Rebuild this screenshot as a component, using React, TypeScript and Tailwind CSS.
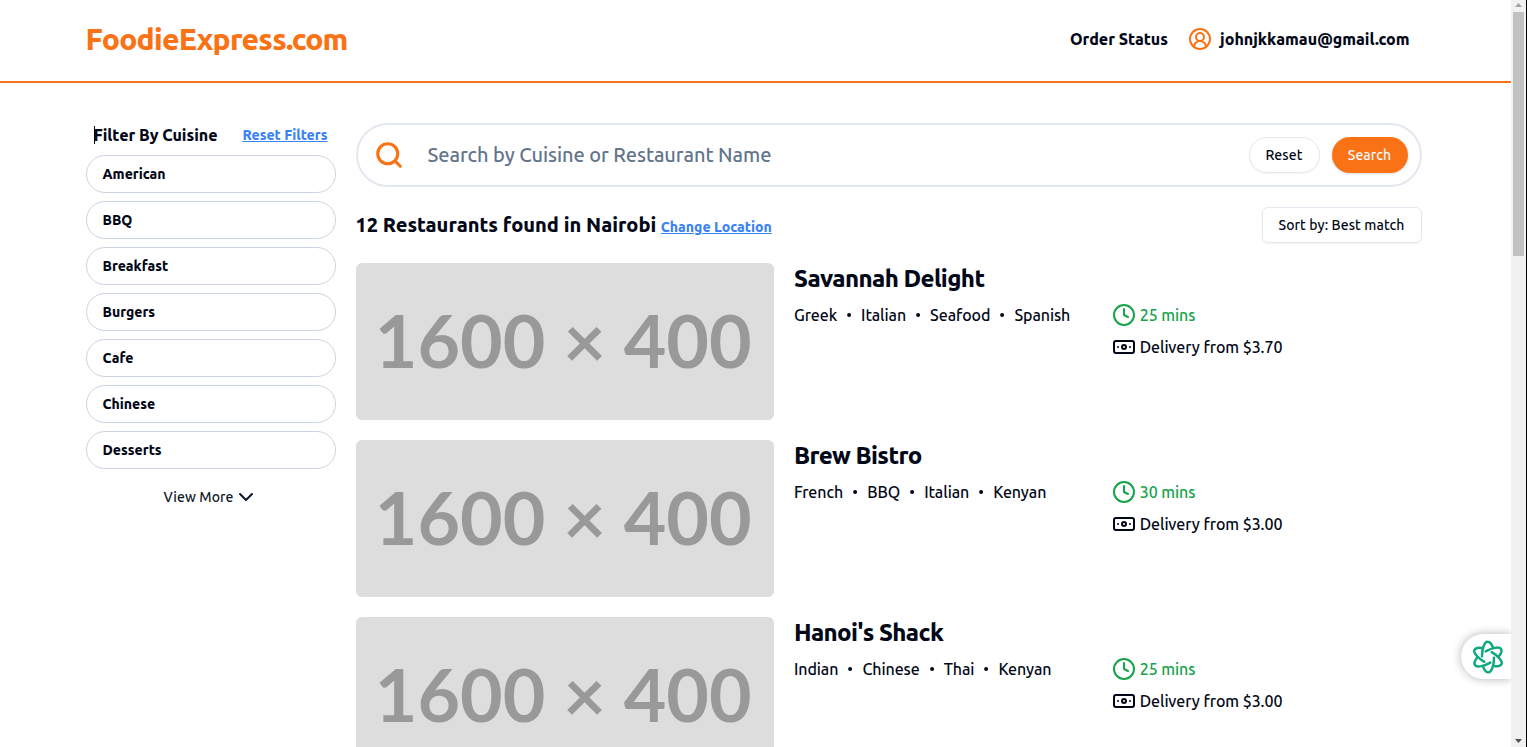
import { Banknote, ChevronDown, CircleUserRound, Clock, Dot, Search } from "lucide-react";

type Restaurant = {
  name: string;
  cuisines: string[];
  minutes: number;
  fee: string;
};

const cuisineFilters = ["American", "BBQ", "Breakfast", "Burgers", "Cafe", "Chinese", "Desserts"];

const restaurants: Restaurant[] = [
  { name: "Savannah Delight", cuisines: ["Greek", "Italian", "Seafood", "Spanish"], minutes: 25, fee: "3.70" },
  { name: "Brew Bistro", cuisines: ["French", "BBQ", "Italian", "Kenyan"], minutes: 30, fee: "3.00" },
  { name: "Hanoi's Shack", cuisines: ["Indian", "Chinese", "Thai", "Kenyan"], minutes: 25, fee: "3.00" },
];

function Header() {
  return (
    <header className="flex h-[83px] shrink-0 items-center justify-between border-b-2 border-[#f97316] pr-[101.5px] pb-1 pl-[85.5px]">
      <a className="text-3xl font-extrabold tracking-tight text-[#f97316]">FoodieExpress.com</a>
      <nav className="flex items-center font-extrabold">
        <a>Order Status</a>
        <a className="ml-5 flex items-center gap-2">
          <CircleUserRound size={24} className="text-[#f97316]" />
          johnjkkamau@gmail.com
        </a>
      </nav>
    </header>
  );
}

function CuisineSidebar() {
  return (
    <aside className="w-[250px] shrink-0">
      <div className="flex h-6 items-center justify-between px-2">
        <div className="relative font-extrabold">
          <span className="absolute top-[3px] left-[0.5px] h-[18px] w-px bg-black" />
          Filter By Cuisine
        </div>
        <a className="text-sm font-extrabold text-[#3b82f6] underline">Reset Filters</a>
      </div>
      <ul className="mt-2 flex flex-col gap-2">
        {cuisineFilters.map((cuisine) => (
          <li
            key={cuisine}
            className="flex h-[38px] items-center rounded-full border border-[#cbd5e1] px-4 text-sm font-extrabold"
          >
            {cuisine}
          </li>
        ))}
      </ul>
      <button className="mx-auto mt-4 flex items-center text-sm font-medium tracking-[0.08px] text-[#0f172a]">
        View More
        <ChevronDown size={24} />
      </button>
    </aside>
  );
}

function SearchBar() {
  return (
    <form className="flex h-16 items-center rounded-full border-2 border-[#e2e8f0] pr-3 pl-4">
      <Search size={30} strokeWidth={2.5} className="text-[#f97316]" />
      <div className="ml-6 flex-1 text-xl tracking-[-0.08px] text-[#64748b]">Search by Cuisine or Restaurant Name</div>
      <div className="flex gap-3 text-sm font-medium tracking-[0.08px]">
        <button
          type="button"
          className="flex h-9 w-[71px] items-center justify-center rounded-full border border-[#e2e8f0] shadow-xs"
        >
          Reset
        </button>
        <button
          type="button"
          className="flex h-9 w-[76px] items-center justify-center rounded-full bg-[#f97316] text-[#f8fafc] shadow-sm"
        >
          Search
        </button>
      </div>
    </form>
  );
}

function RestaurantCard({ restaurant }: { restaurant: Restaurant }) {
  return (
    <article className="grid grid-cols-[2fr_3fr] gap-5">
      <div className="flex h-[157px] items-center justify-center overflow-hidden rounded-md bg-[#dddddd] pr-[3px] pb-[3px] font-['Lato',sans-serif] text-[73.5px] leading-none font-bold whitespace-nowrap text-[#999999]">
        1600 × 400
      </div>
      <div>
        <h3 className="mb-2 text-2xl font-extrabold tracking-tight">{restaurant.name}</h3>
        <div className="grid grid-cols-2 gap-2 tracking-[-0.07px]">
          <div className="flex h-6 items-center">
            {restaurant.cuisines.map((cuisine, index) => (
              <span key={cuisine} className="flex items-center">
                {index > 0 && <Dot size={24} />}
                {cuisine}
              </span>
            ))}
          </div>
          <div className="flex flex-col gap-2">
            <div className="flex items-center gap-1 text-[#16a34a]">
              <Clock size={24} />
              {restaurant.minutes} mins
            </div>
            <div className="flex items-center gap-1">
              <Banknote size={24} />
              Delivery from ${restaurant.fee}
            </div>
          </div>
        </div>
      </div>
    </article>
  );
}

function AssistantTab() {
  return (
    <div className="absolute top-[634px] right-4 flex h-[45px] w-[50px] items-center rounded-l-full bg-white pl-[9px] shadow-[0_0_10px_rgba(0,0,0,0.3)] [clip-path:inset(-16px_0_-16px_-16px)]">
      <svg width="36" height="36" viewBox="-18 -18 36 36" fill="none" stroke="#0ea97f" strokeWidth="2.5" strokeLinecap="round">
        {[0, 60, 120, 180, 240, 300].map((angle) => (
          <path key={angle} d="M-6 -0.8C-6 -7 -4 -15.3 -0.5 -15.3C2 -15.3 3.8 -12.6 4.8 -9.8" transform={`rotate(${angle})`} />
        ))}
      </svg>
    </div>
  );
}

function Scrollbar() {
  return (
    <div className="flex h-full w-4 shrink-0 flex-col items-center border-r border-black bg-[#f1f1f1]">
      <svg className="h-3 w-[15px] shrink-0" viewBox="0 0 15 12">
        <path d="M4 7L7.5 3L11 7Z" fill="#a3a3a3" />
      </svg>
      <div className="h-[244px] w-[11px] shrink-0 bg-[#c1c1c1]" />
      <svg className="mt-auto h-3 w-[15px] shrink-0" viewBox="0 0 15 12">
        <path d="M4 4L7.5 8L11 4Z" fill="#505050" />
      </svg>
    </div>
  );
}

export default function App() {
  return (
    <div className="relative flex h-[747px] w-full overflow-hidden bg-white font-['Ubuntu','Noto_Sans',sans-serif] text-base font-medium text-[#020817]">
      <div className="flex h-full min-w-0 flex-1 flex-col overflow-hidden">
        <Header />
        <div className="flex gap-5 pt-10 pr-[89.5px] pl-[85.5px]">
          <CuisineSidebar />
          <main className="flex min-w-0 flex-1 flex-col gap-5">
            <SearchBar />
            <div className="flex h-9 items-center justify-between">
              <div className="flex items-baseline gap-[4.5px] text-xl font-extrabold">
                12 Restaurants found in Nairobi
                <a className="text-sm text-[#3b82f6] underline">Change Location</a>
              </div>
              <button className="flex h-9 w-[160px] items-center justify-center rounded-md border border-[#e2e8f0] text-sm font-medium tracking-[0.08px] shadow-xs">
                Sort by: Best match
              </button>
            </div>
            {restaurants.map((restaurant) => (
              <RestaurantCard key={restaurant.name} restaurant={restaurant} />
            ))}
          </main>
        </div>
      </div>
      <Scrollbar />
      <AssistantTab />
    </div>
  );
}
